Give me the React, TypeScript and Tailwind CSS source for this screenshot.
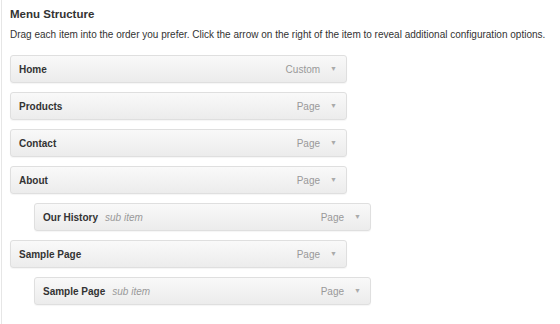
const items = [
  { title: "Home", type: "Custom", sub: false },
  { title: "Products", type: "Page", sub: false },
  { title: "Contact", type: "Page", sub: false },
  { title: "About", type: "Page", sub: false },
  { title: "Our History", type: "Page", sub: true },
  { title: "Sample Page", type: "Page", sub: false },
  { title: "Sample Page", type: "Page", sub: true },
];

function MenuItem({ title, type, sub }: { title: string; type: string; sub: boolean }) {
  return (
    <div className={sub ? "pl-6" : ""}>
      <div className="flex h-[28px] w-[337px] items-center rounded-[3px] border border-[#dfdfdf] bg-gradient-to-b from-[#f9f9f9] to-[#ececec] pl-[8px] pr-[9px] shadow-[0_1px_1px_rgba(0,0,0,0.04)]">
        <span className="text-[10px] font-bold text-[#333]">{title}</span>
        {sub && <span className="ml-[7px] text-[10px] italic text-[#999]">sub item</span>}
        <span className="ml-auto text-[10px] text-[#999]">{type}</span>
        <span className="ml-[10px] text-[7px] text-[#aaa]">▼</span>
      </div>
    </div>
  );
}

export default function App() {
  return (
    <div className="h-[324px] bg-white pl-px font-['Liberation_Sans',Arial,sans-serif]">
      <div className="h-full border-l border-[#e6e6e6] pl-[8px] pt-[6px]">
        <h3 className="text-[11.5px] font-bold leading-[16px] text-[#333]">Menu Structure</h3>
        <p className="mt-[6px] whitespace-nowrap text-[10px] leading-[14px] text-[#333]">
          Drag each item into the order you prefer. Click the arrow on the right of the item to reveal additional configuration options.
        </p>
        <div className="mt-[13px] flex flex-col gap-[9px]">
          {items.map((it, i) => (
            <MenuItem key={i} {...it} />
          ))}
        </div>
      </div>
    </div>
  );
}
